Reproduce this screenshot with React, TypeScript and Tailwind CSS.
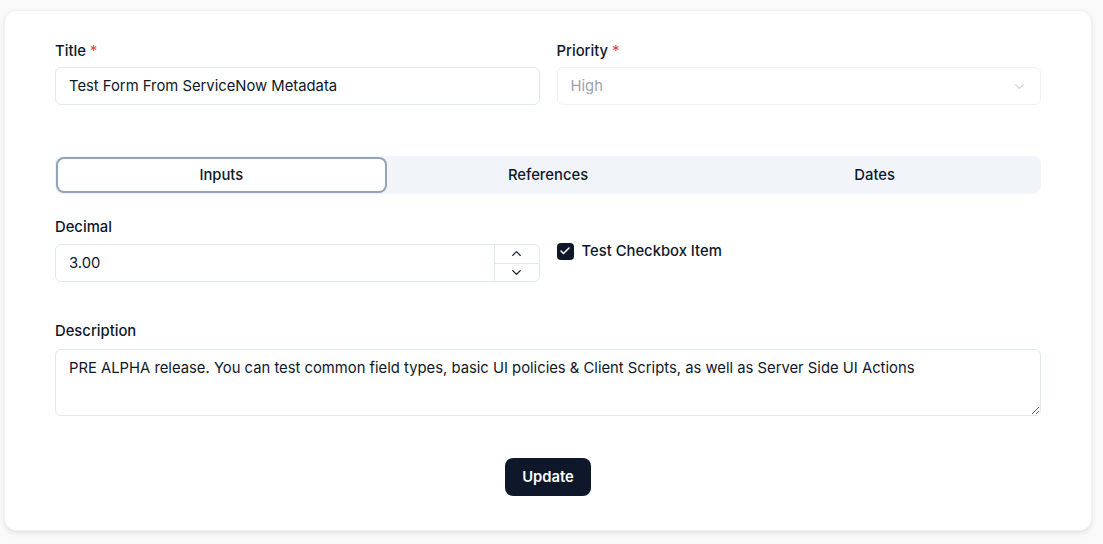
import React, { useState } from 'react';
import { Check, ChevronDown, ChevronUp } from 'lucide-react';

const tabs = ['Inputs', 'References', 'Dates'];

function Label({ children, required }: { children: React.ReactNode; required?: boolean }) {
  return (
    <label className="block text-[14.8px] font-medium text-[#0f172a] leading-5">
      {children}
      {required && <span className="ml-1 text-[#ef4444]">*</span>}
    </label>
  );
}

export default function App() {
  const [activeTab, setActiveTab] = useState('Inputs');
  const [checked, setChecked] = useState(true);
  const [decimal, setDecimal] = useState('3.00');

  return (
    <div
      className="min-h-screen bg-[#fafafa] px-1 pt-[10px] pb-4"
      style={{ fontFamily: 'Inter, "Noto Sans", sans-serif' }}
    >
      <div className="w-[1088px] rounded-xl border border-[#f1f1f1] bg-white px-[50px] pt-[30px] pb-[34px] shadow-[0_2px_6px_rgba(0,0,0,0.08),0_1px_2px_rgba(0,0,0,0.04)]">
        {/* top fields */}
        <div className="grid grid-cols-2 gap-[17px]">
          <div className="flex flex-col gap-[6px]">
            <Label required>Title</Label>
            <input
              defaultValue="Test Form From ServiceNow Metadata"
              className="h-[38px] w-full rounded-md border border-[#e2e8f0] bg-white px-[13px] text-[14.8px] text-[#0f172a] outline-none"
            />
          </div>
          <div className="flex flex-col gap-[6px]">
            <Label required>Priority</Label>
            <button
              disabled
              className="flex h-[38px] w-full items-center justify-between rounded-md border border-[#eef1f5] bg-white px-[13px] text-[14.8px] text-[#a1a1aa]"
            >
              <span>High</span>
              <ChevronDown size={15} className="text-[#cbd5e1]" />
            </button>
          </div>
        </div>

        {/* tabs */}
        <div className="mt-[51px] grid h-[38px] grid-cols-3 items-center rounded-lg bg-[#f1f5f9] p-[3px]">
          {tabs.map((t) => (
            <button
              key={t}
              onClick={() => setActiveTab(t)}
              className={
                t === activeTab
                  ? 'h-[32px] rounded-md bg-white text-[14.8px] font-medium text-[#0f172a] ring-2 ring-[#94a3b8] shadow-sm'
                  : 'h-[32px] rounded-md text-[14.8px] font-medium text-[#0f172a]'
              }
            >
              {t}
            </button>
          ))}
        </div>

        {/* inputs tab */}
        <div className="mt-[23px] grid grid-cols-2 gap-[17px]">
          <div className="flex flex-col gap-[7px]">
            <Label>Decimal</Label>
            <div className="flex h-[38px] w-full overflow-hidden rounded-md border border-[#e2e8f0] bg-white">
              <input
                value={decimal}
                onChange={(e) => setDecimal(e.target.value)}
                className="min-w-0 flex-1 px-[13px] text-[14.8px] text-[#0f172a] outline-none"
              />
              <div className="flex w-[45px] flex-col border-l border-[#e2e8f0]">
                <button className="flex flex-1 items-center justify-center border-b border-[#e2e8f0] text-[#0f172a]">
                  <ChevronUp size={15} strokeWidth={2} />
                </button>
                <button className="flex flex-1 items-center justify-center text-[#0f172a]">
                  <ChevronDown size={15} strokeWidth={2} />
                </button>
              </div>
            </div>
          </div>
          <div className="pt-[24px]">
            <label className="flex items-center gap-2 text-[14.8px] font-medium leading-5 text-[#0f172a]">
              <button
                onClick={() => setChecked(!checked)}
                className="flex h-[17px] w-[17px] items-center justify-center rounded-[4px] bg-[#0f172a] text-white"
              >
                {checked && <Check size={12} strokeWidth={3} />}
              </button>
              Test Checkbox Item
            </label>
          </div>
        </div>

        {/* description */}
        <div className="mt-[39px] flex flex-col gap-2">
          <Label>Description</Label>
          <textarea
            defaultValue="PRE ALPHA release. You can test common field types, basic UI policies & Client Scripts, as well as Server Side UI Actions"
            className="block h-[67px] w-full rounded-md border border-[#e2e8f0] bg-white px-[13px] py-2 text-[14.8px] leading-5 text-[#0f172a] outline-none"
          />
        </div>

        <div className="mt-[42px] flex justify-center">
          <button className="h-[38px] rounded-lg bg-[#0f172a] px-[17px] text-[14.8px] font-semibold text-white">
            Update
          </button>
        </div>
      </div>
    </div>
  );
}
